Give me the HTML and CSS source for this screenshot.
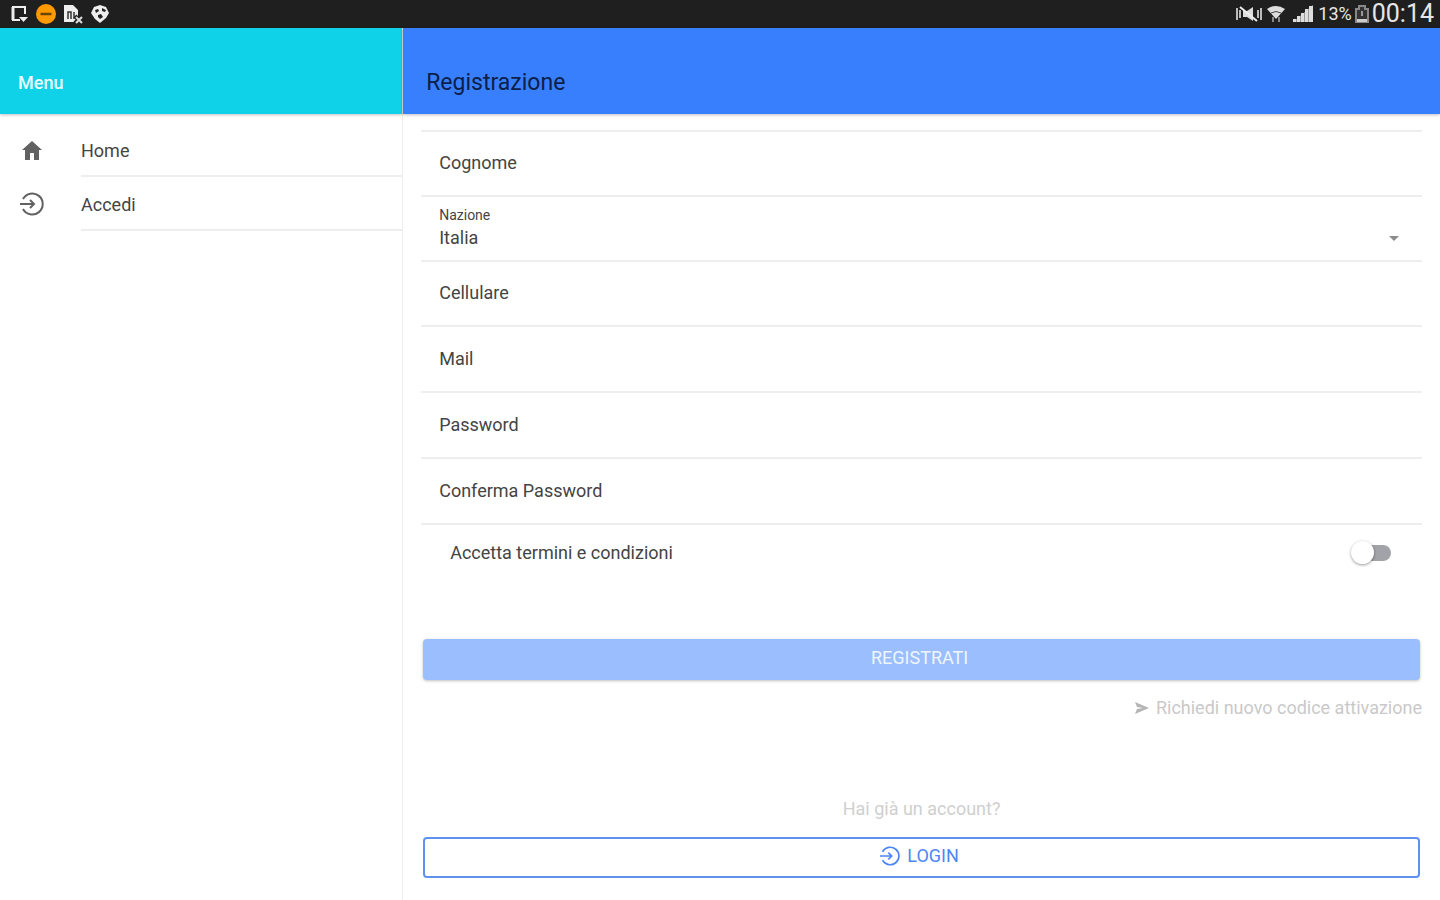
FILE: index.html
```
<!DOCTYPE html>
<html lang="it">
  <head>
    <meta charset="utf-8" />
    <meta name="viewport" content="width=device-width, initial-scale=1" />
    <title>Registrazione</title>
    <link rel="stylesheet" href="styles.css">
  </head>

  <body>
    <div class="status-bar">
      <div class="status-left">
        <svg width="20" height="20" viewBox="0 0 20 20"><path d="M16 10V3H4v13h7" fill="none" stroke="#eee" stroke-width="2"/><path d="M4 3v13" stroke="#eee" stroke-width="3"/><path d="M10 13h9l-4.500 5z" fill="#eee"/></svg>
        <svg width="20" height="20" viewBox="0 0 20 20"><circle cx="10" cy="10" r="10" fill="#f90"/><path d="M4.500 10h11" stroke="#6b4508" stroke-width="2.500"/></svg>
        <svg width="20" height="20" viewBox="0 0 20 20"><path d="M1 1h9l5 5v12H1z" fill="#eee"/><path d="M5 15V8h3v7M11 15V8" fill="none" stroke="#333" stroke-width="1.500"/><path d="M12 12l7 7M19 12l-7 7" stroke="#1f1f1f" stroke-width="4"/><path d="M13 13l6 6M19 13l-6 6" stroke="#ddd" stroke-width="2"/></svg>
        <svg width="20" height="20" viewBox="0 0 20 20"><path d="M10 1l6 2 3 6-3 5-6 5-5-4-4-6 3-6z" fill="#eee"/><path d="M5 6l3-1 1 2-3 2zM12 4l4 2-1 2-3-1zM8 11l3-1 2 3-3 2-2-2z" fill="#222"/></svg>
      </div>
      <div class="status-right">
        <svg width="28" height="18" viewBox="0 0 28 18"><path d="M2 3v12M5 5v8M26 3v12M23 5v8" stroke="#bbb" stroke-width="2"/><path d="M8 6h4l6-4v14l-6-4H8z" fill="#ddd"/><path d="M5 2l17 14" stroke="#eee" stroke-width="2"/></svg>
        <svg width="20" height="18" viewBox="0 0 20 18"><path d="M1 4q9-6 18 0l-9 10z" fill="#ddd"/><path d="M5 8q5-3 10 0" fill="none" stroke="#444"/><path d="M7 12v5M13 12v5" stroke="#888" stroke-width="2"/></svg>
        <svg class="signal" width="20" height="18" viewBox="0 0 20 18"><path d="M0 17L20 0v17z" fill="#999"/><path d="M0 17v-3h3v3zM4 17v-6h3v6zM8 17V8h3v9zM12 17V4h3v13zM16 17V1h4v16z" fill="#ddd"/></svg>
        <span class="battery-level">13%</span>
        <svg width="14" height="18" viewBox="0 0 14 18"><path d="M4 1h6v3h3v13H1V4h3z" fill="#333" stroke="#888" stroke-width="2"/><path d="M2 14h10v3H2z" fill="#ccc"/><path d="M7 6v5" stroke="#999" stroke-width="2"/></svg>
        <span class="clock">00:14</span>
      </div>
    </div>

    <div class="split-pane">
      <aside class="menu">
        <header class="toolbar menu-toolbar">
          <h2 class="menu-title">Menu</h2>
        </header>
        <nav class="menu-list">
          <a class="menu-item" href="#">
            <svg class="menu-icon" width="24" height="24" viewBox="0 0 24 24"><path d="M5 22V12H2L12 3l10 9h-3v10h-5v-7h-4v7z" fill="#616161"/></svg>
            <span class="menu-label">Home</span>
          </a>
          <a class="menu-item" href="#">
            <svg class="menu-icon" width="24" height="24" viewBox="0 0 24 24"><path d="M3 7a10.500 10.500 0 1 1 0 10M0 12h14M10 8l4 4-4 4" fill="none" stroke="#616161" stroke-width="2"/></svg>
            <span class="menu-label">Accedi</span>
          </a>
        </nav>
      </aside>

      <main class="page">
        <header class="toolbar">
          <h1 class="page-title">Registrazione</h1>
        </header>
        <form class="content">
          <div class="list">
            <div class="item">
              <label for="cognome">Cognome</label>
              <input id="cognome" type="text" />
            </div>
            <div class="item item-stacked">
              <label for="nazione">Nazione</label>
              <select id="nazione">
                <option>Italia</option>
              </select>
              <svg class="arrow" width="10" height="5" viewBox="0 0 10 5"><path d="M0 0h10L5 5z" fill="#8c8c8c"/></svg>
            </div>
            <div class="item">
              <label for="cellulare">Cellulare</label>
              <input id="cellulare" type="tel" />
            </div>
            <div class="item item-tall">
              <label for="mail">Mail</label>
              <input id="mail" type="email" />
            </div>
            <div class="item item-tall">
              <label for="password">Password</label>
              <input id="password" type="password" autocomplete="off" />
            </div>
            <div class="item item-tall">
              <label for="conferma">Conferma Password</label>
              <input id="conferma" type="password" autocomplete="off" />
            </div>
          </div>
          <div class="terms">
            <label for="termini">Accetta termini e condizioni</label>
            <input class="toggle" id="termini" type="checkbox" />
          </div>
          <button class="button button-register" type="submit" disabled>REGISTRATI</button>
          <a class="resend" href="#">
            <svg width="14" height="12" viewBox="0 0 14 12"><path d="M0 0l14 6-14 6 2-5 6-1-6-1z" fill="#b5b5b5"/></svg>
            Richiedi nuovo codice attivazione
          </a>
          <p class="hint">Hai già un account?</p>
          <button class="button button-login" type="button">
            <svg width="20" height="20" viewBox="0 0 24 24"><path d="M3 7a10.500 10.500 0 1 1 0 10M0 12h14M10 8l4 4-4 4" fill="none" stroke="#4d86f7" stroke-width="2"/></svg>
            LOGIN
          </button>
        </form>
      </main>
    </div>
  </body>
</html>
```
FILE: styles.css
```
* {
    box-sizing: border-box;
}
body {
    display: flex;
    flex-direction: column;
    min-height: 100vh;
    margin: 0;
    background: #fff;
    color: #444;
    font-family: Roboto, sans-serif;
    font-size: 18px;
    line-height: 24px;
}
svg {
    flex: none;
}
a {
    color: inherit;
    text-decoration: none;
}
input, select, button {
    font: inherit;
    color: inherit;
}

/* status bar */
.status-bar {
    display: flex;
    align-items: center;
    justify-content: space-between;
    height: 28px;
    padding: 0 6px 0 9px;
    background: #1f1f1f;
    color: #e6e6e6;
}
.status-left {
    display: flex;
    gap: 7px;
}
.status-right {
    display: flex;
    align-items: center;
    gap: 3px;
}
.signal {
    margin-left: 4px;
}
.battery-level {
    margin-left: 2px;
}
.clock {
    font-size: 25px;
}

/* layout */
.split-pane {
    display: flex;
    flex: 1;
}
.menu {
    width: 28%;
    border-right: 1px solid #eee;
}
.page {
    flex: 1;
}
.toolbar {
    height: 86px;
    padding: 42px 23px 0;
    background: #387ffe;
    box-shadow: 0 1px 3px rgba(0, 0, 0, 0.25);
}
.menu-toolbar {
    padding: 42px 18px 0;
    background: #0fd2e8;
}
.menu-title, .page-title {
    margin: 0;
    line-height: 26px;
}
.menu-title {
    color: #e8fbfd;
    font-size: 18px;
    font-weight: 500;
}
.page-title {
    color: #0c2048;
    font-size: 23px;
    font-weight: 400;
}

/* menu */
.menu-list {
    padding-top: 9px;
}
.menu-item {
    display: flex;
    align-items: center;
    gap: 37px;
    padding-left: 20px;
}
.menu-label {
    flex: 1;
    height: 54px;
    padding-top: 16px;
    border-bottom: 2px solid #eee;
}

/* form */
.content {
    display: flex;
    flex-direction: column;
    padding: 16px 18px 22px;
}
.list {
    border-top: 2px solid #eee;
}
.item {
    display: flex;
    align-items: center;
    gap: 16px;
    height: 65px;
    padding: 0 23px 2px 18px;
    border-bottom: 2px solid #eee;
}
.item-tall {
    height: 66px;
    padding-bottom: 0;
}
.item input {
    flex: 1;
    min-width: 0;
    border: 0;
    outline: 0;
    background: none;
}
.item-stacked {
    display: grid;
    grid-template-columns: 1fr auto;
    grid-template-rows: 16px 24px;
    align-content: center;
    row-gap: 3px;
    padding-bottom: 0;
}
.item-stacked label {
    grid-column: 1 / 3;
    font-size: 14px;
    line-height: 16px;
}
.item-stacked select {
    height: 24px;
    padding: 0;
    border: 0;
    outline: 0;
    background: none;
    appearance: none;
}
.terms {
    display: flex;
    align-items: center;
    justify-content: space-between;
    height: 56px;
    padding: 0 31px 0 29px;
}
.toggle {
    position: relative;
    width: 38px;
    height: 16px;
    margin: 0;
    border-radius: 8px;
    background: #a2a3a8;
    appearance: none;
}
.toggle::before {
    content: "";
    position: absolute;
    top: -4px;
    left: -2px;
    width: 23px;
    height: 23px;
    border-radius: 50%;
    background: #fff;
    box-shadow: 0 1px 3px rgba(0, 0, 0, 0.4);
}
.toggle:checked::before {
    left: 17px;
}
.button {
    display: flex;
    align-items: center;
    justify-content: center;
    gap: 7px;
    height: 41px;
    margin: 0 2px;
    padding: 0 4px 3px 0;
    border-radius: 4px;
}
.button-register {
    margin-top: 58px;
    border: 0;
    background: #9bbffe;
    box-shadow: 0 1px 3px rgba(0, 0, 0, 0.25);
    color: #eff5ff;
}
.resend {
    display: flex;
    align-items: center;
    align-self: flex-end;
    gap: 7px;
    margin-top: 16px;
    color: #c9c9c9;
}
.hint {
    margin: 77px 0 16px;
    color: #cfcfcf;
    text-align: center;
}
.button-login {
    border: 2px solid #5f92ee;
    background: #fff;
    color: #4d86f7;
}
```
